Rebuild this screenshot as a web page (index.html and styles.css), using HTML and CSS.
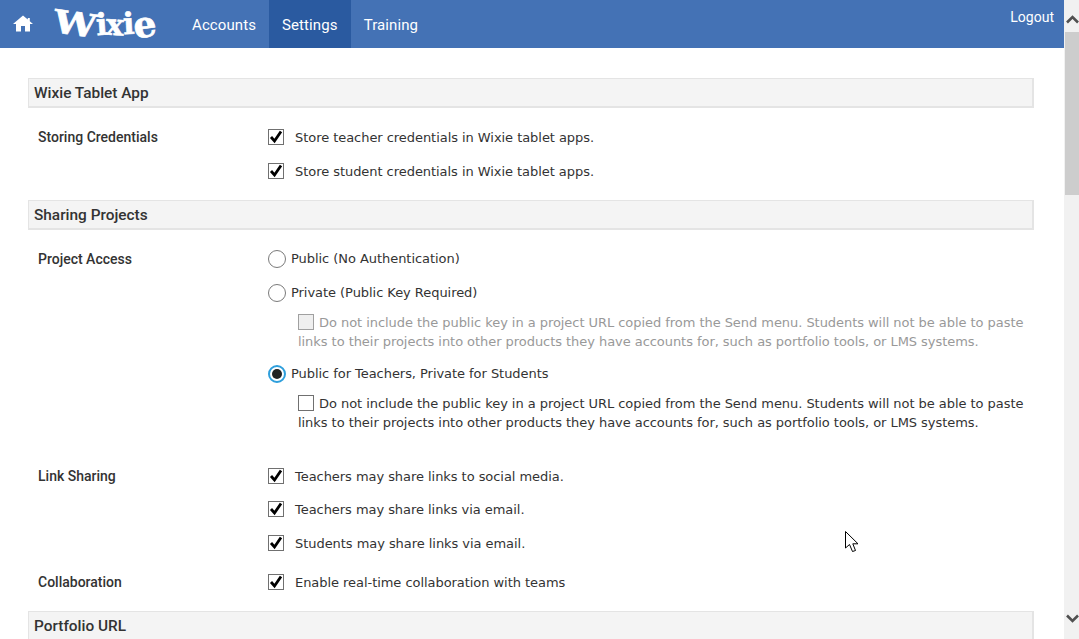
FILE: index.html
```html
<!DOCTYPE html>
<html lang="en">
<head>
<meta charset="utf-8">
<title>Wixie Settings</title>
<link rel="stylesheet" href="styles.css">
</head>
<body>
<div class="page">
  <div class="main">
    <header class="topbar">
      <a class="home" href="#"><svg width="20" height="17" viewBox="0 0 20 17"><path fill="#fff" d="M10 0.5 L14.8 4.5 V3 H16.8 V6.3 L20 9 H17 V16.5 H12 V11 H8 V16.5 H3 V9 H0 Z"/></svg></a>
      <a class="logo" href="#"><span class="l-w">W</span><span class="l-i">i</span><span class="l-x">x</span><span class="l-j">i</span><span class="l-e">e</span></a>
      <nav class="nav">
        <a class="tab" href="#">Accounts</a>
        <a class="tab active" href="#">Settings</a>
        <a class="tab" href="#">Training</a>
      </nav>
      <a class="logout" href="#">Logout</a>
    </header>
    <main class="content">
      <h2 class="head">Wixie Tablet App</h2>
      <div class="row">
        <div class="label">Storing Credentials</div>
        <div class="opts">
          <div class="opt"><span class="box"><svg width="14" height="14" viewBox="0 0 14 14"><path class="tick" d="M2 7 L5.5 11 L12 1.5"/></svg></span><span class="txt">Store teacher credentials in Wixie tablet apps.</span></div>
          <div class="opt"><span class="box"><svg width="14" height="14" viewBox="0 0 14 14"><path class="tick" d="M2 7 L5.5 11 L12 1.5"/></svg></span><span class="txt">Store student credentials in Wixie tablet apps.</span></div>
        </div>
      </div>
      <h2 class="head">Sharing Projects</h2>
      <div class="row">
        <div class="label">Project Access</div>
        <div class="opts">
          <div class="opt radio-opt"><span class="radio"></span><span class="rtxt">Public (No Authentication)</span></div>
          <div class="opt radio-opt"><span class="radio"></span><span class="rtxt">Private (Public Key Required)</span></div>
          <p class="sub disabled"><span class="box small"></span>Do not include the public key in a project URL copied from the Send menu. Students will not be able to paste links to their projects into other products they have accounts for, such as portfolio tools, or LMS systems.</p>
          <div class="opt radio-opt"><span class="radio on"></span><span class="rtxt">Public for Teachers, Private for Students</span></div>
          <p class="sub"><span class="box small"></span>Do not include the public key in a project URL copied from the Send menu. Students will not be able to paste links to their projects into other products they have accounts for, such as portfolio tools, or LMS systems.</p>
        </div>
      </div>
      <div class="row links">
        <div class="label">Link Sharing</div>
        <div class="opts">
          <div class="opt"><span class="box"><svg width="14" height="14" viewBox="0 0 14 14"><path class="tick" d="M2 7 L5.5 11 L12 1.5"/></svg></span><span class="txt">Teachers may share links to social media.</span></div>
          <div class="opt"><span class="box"><svg width="14" height="14" viewBox="0 0 14 14"><path class="tick" d="M2 7 L5.5 11 L12 1.5"/></svg></span><span class="txt">Teachers may share links via email.</span></div>
          <div class="opt"><span class="box"><svg width="14" height="14" viewBox="0 0 14 14"><path class="tick" d="M2 7 L5.5 11 L12 1.5"/></svg></span><span class="txt">Students may share links via email.</span></div>
        </div>
      </div>
      <div class="row collab">
        <div class="label">Collaboration</div>
        <div class="opts">
          <div class="opt"><span class="box"><svg width="14" height="14" viewBox="0 0 14 14"><path class="tick" d="M2 7 L5.5 11 L12 1.5"/></svg></span><span class="txt">Enable real-time collaboration with teams</span></div>
        </div>
      </div>
      <h2 class="head">Portfolio URL</h2>
    </main>
  </div>
  <aside class="scrollbar">
    <svg class="arrow" width="13" height="9" viewBox="0 0 13 9"><path d="M1 7.5 L6.5 2 L12 7.5"/></svg>
    <div class="thumb"></div>
    <svg class="arrow down" width="13" height="9" viewBox="0 0 13 9"><path d="M1 1.5 L6.5 7 L12 1.5"/></svg>
  </aside>
  <svg class="cursor" width="14" height="22" viewBox="0 0 14 22"><path d="M0.5 0.5 V17 L4.5 13.5 L7.5 20.5 L10.5 19.5 L7.8 12.8 L13 12.8 Z"/></svg>
</div>
</body>
</html>
```
FILE: styles.css
```css
* { box-sizing: border-box; }
html, body { margin: 0; height: 100%; overflow: hidden; background: #fff; }
.page { position: relative; display: flex; width: 1079px; height: 639px; overflow: hidden; }
.main { width: 1064px; flex: none; }
.topbar { display: flex; align-items: stretch; height: 48px; background: #4472b5; position: relative; }
.home { display: flex; align-items: center; width: 55px; padding: 0 0 2px 13px; }
.logo { width: 124px; padding-top: 1px; text-decoration: none; color: #fff; -webkit-text-stroke: 0.6px #fff; font-family: "DejaVu Serif", serif; font-weight: 700; font-size: 30px; line-height: 46px; white-space: nowrap; letter-spacing: -1px; }
.logo span { display: inline-block; }
.l-w { transform: rotate(8deg) scale(1.2, 1); margin: 0 4px 0 2px; font-size: 32px; }
.l-i { transform: rotate(-4deg); }
.l-x { transform: rotate(4deg); }
.l-j { transform: rotate(-3deg) translateY(-1px); }
.l-e { transform: rotate(-8deg) scale(1.2, 1.2); margin-left: 1px; }
.nav { display: flex; }
.tab { display: flex; align-items: center; padding: 2px 13px 0; color: #fff; text-decoration: none; font-family: Roboto, sans-serif; font-size: 15px; letter-spacing: 0.1px; }
.tab.active { background: #2a5aa0; }
.logout { margin-left: auto; padding: 8px 10px 0 0; color: #fff; text-decoration: none; font-family: Roboto, sans-serif; font-size: 14px; line-height: 18px; }
.content { padding: 30px 30px 0 28px; font-family: "DejaVu Sans", Verdana, sans-serif; font-size: 13px; letter-spacing: -0.05px; color: #333; }
.head { height: 30px; margin: 12px 0; padding: 1px 0 0 5px; border: 2px solid #e4e4e4; border-width: 1px 2px 2px 1px; background: #f4f4f4; font-family: Roboto, sans-serif; font-weight: 500; font-size: 15.4px; line-height: 27px; letter-spacing: 0; color: #333; }
.head:first-child { margin-top: 0; }
.row { display: grid; grid-template-columns: 230px 1fr; padding-left: 10px; }
.label { font-family: Roboto, sans-serif; font-weight: 500; font-size: 14px; letter-spacing: 0; line-height: 34px; color: #333; }
.opt { display: flex; align-items: center; height: 34px; }
.txt { padding-top: 1px; }
.rtxt { padding-bottom: 2px; }
.box { display: inline-flex; align-items: center; justify-content: center; flex: none; width: 16px; height: 16px; margin-right: 11px; border: 1px solid #707070; background: #fff; }
.box.small { display: inline-block; vertical-align: -3px; margin-right: 5px; }
.tick { fill: none; stroke: #000; stroke-width: 2.8; }
.radio { flex: none; width: 18px; height: 18px; margin-right: 5px; border: 1px solid #7a7a7a; border-radius: 50%; background: #fff; }
.radio.on { border: 2px solid #2f9fdc; padding: 2px; background: #222; background-clip: content-box; }
.sub { margin: 2.5px 0 0 30px; line-height: 19px; }
.sub.disabled { margin-bottom: 6.5px; color: #999; }
.sub.disabled .box { border-color: #a0a0a0; background: #efefef; }
.links { padding-top: 27.5px; }
.links .opt { height: 33.5px; }
.collab { margin-top: 5.5px; }
.scrollbar { flex: none; width: 15px; background: #f1f1f1; display: flex; flex-direction: column; align-items: flex-end; padding-top: 15px; }
.arrow path { fill: none; stroke: #505050; stroke-width: 2.6; }
.thumb { width: 14px; height: 163px; margin-top: 8px; background: #cdcdcd; }
.arrow.down { margin-top: 419px; }
.cursor { position: absolute; left: 845px; top: 531px; }
.cursor path { fill: #fff; stroke: #000; stroke-width: 1; }
```
